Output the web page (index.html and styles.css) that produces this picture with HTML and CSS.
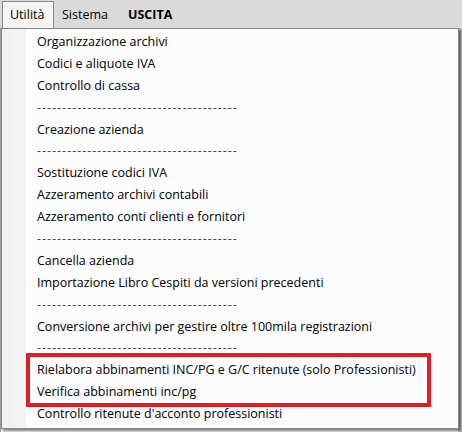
FILE: index.html
```html
<!DOCTYPE html>
<html lang="it">
<head>
<meta charset="utf-8">
<link rel="stylesheet" href="styles.css">
</head>
<body>
<div class="app">
  <div class="menubar">
    <div class="mb-item active">Utilità</div>
    <div class="mb-item">Sistema</div>
    <div class="mb-item bold">USCITA</div>
  </div>
  <div class="workspace">
    <div class="edge-left"></div>
    <div class="edge-right"></div>
  </div>
  <div class="dropdown">
    <div class="gutter"></div>
    <ul class="items">
      <li>Organizzazione archivi</li>
      <li>Codici e aliquote IVA</li>
      <li>Controllo di cassa</li>
      <li class="sep">----------------------------------------</li>
      <li>Creazione azienda</li>
      <li class="sep">----------------------------------------</li>
      <li>Sostituzione codici IVA</li>
      <li>Azzeramento archivi contabili</li>
      <li>Azzeramento conti clienti e fornitori</li>
      <li class="sep">----------------------------------------</li>
      <li>Cancella azienda</li>
      <li>Importazione Libro Cespiti da versioni precedenti</li>
      <li class="sep">----------------------------------------</li>
      <li>Conversione archivi per gestire oltre 100mila registrazioni</li>
      <li class="sep">----------------------------------------</li>
      <li>Rielabora abbinamenti INC/PG e G/C ritenute (solo Professionisti)</li>
      <li>Verifica abbinamenti inc/pg</li>
      <li>Controllo ritenute d'acconto professionisti</li>
    </ul>
    <div class="highlight"></div>
  </div>
</div>
</body>
</html>
```
FILE: styles.css
```css
* { box-sizing: border-box; }
html, body {
  margin: 0;
  padding: 0;
}
body {
  width: 462px;
  height: 432px;
  overflow: hidden;
  background: #ececec;
  font-family: "Open Sans", "Noto Sans", sans-serif;
  font-size: 12px;
  color: #000;
}
.app {
  position: relative;
  width: 462px;
  height: 432px;
}
.menubar {
  height: 28px;
  background: #dadada;
  display: flex;
  align-items: stretch;
  padding-left: 2px;
  padding-top: 1px;
}
.mb-item {
  padding: 0 7px;
  line-height: 26px;
  border: 1px solid transparent;
  border-bottom: none;
  font-size: 12.5px;
}
.mb-item.active {
  background: #f4f4f4;
  border-color: #8a8a8a;
  padding: 0 7px;
  width: 52px;
}
.mb-item.bold {
  font-weight: 700;
  padding-left: 11px;
}
.workspace {
  height: 404px;
  background: #f3f3f3;
  display: flex;
  justify-content: space-between;
}
.edge-left {
  width: 1px;
  background: #9a9a9a;
}
.edge-right {
  width: 4px;
  background: #b9b9b9;
}
.dropdown {
  position: absolute;
  left: 1px;
  top: 28px;
  width: 458px;
  height: 401px;
  background: #fcfcfc;
  border: 1px solid #858585;
  box-shadow: 2px 2px 2px rgba(0, 0, 0, 0.45);
  display: flex;
}
.gutter {
  width: 24px;
  flex: none;
  background: linear-gradient(to right, #f0f0f0, #f5f5f5);
}
.items {
  list-style: none;
  margin: 0;
  padding: 2px 0 0 11px;
  flex: 1;
  font-size: 12.5px;
}
.items li {
  height: 21.9px;
  line-height: 21.9px;
  white-space: nowrap;
}
.items li.sep {
  color: #444;
  letter-spacing: 1px;
}
.highlight {
  position: absolute;
  left: 24px;
  top: 324px;
  width: 405px;
  height: 54px;
  border: 4px solid #e31b23;
}
```
